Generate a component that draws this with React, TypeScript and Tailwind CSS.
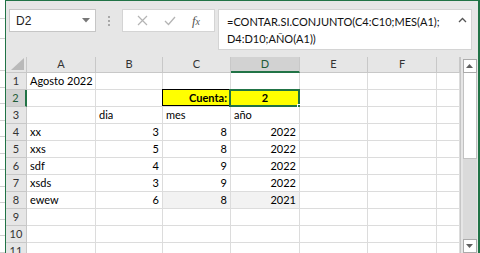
import React from 'react';

const GREEN = '#217346';

type Cell = { v?: string; align?: 'l' | 'r' | 'c'; bold?: boolean; bg?: string };

// columnas: A..G
const rows: Cell[][] = [
  [{ v: 'Agosto 2022' }, {}, {}, {}, {}, {}, {}],
  [{}, {}, { v: 'Cuenta:', align: 'r', bold: true }, { v: '2', align: 'c', bold: true }, {}, {}, {}],
  [{}, { v: 'dia' }, { v: 'mes' }, { v: 'año' }, {}, {}, {}],
  [{ v: 'xx' }, { v: '3', align: 'r' }, { v: '8', align: 'r' }, { v: '2022', align: 'r' }, {}, {}, {}],
  [{ v: 'xxs' }, { v: '5', align: 'r' }, { v: '8', align: 'r' }, { v: '2022', align: 'r' }, {}, {}, {}],
  [{ v: 'sdf' }, { v: '4', align: 'r' }, { v: '9', align: 'r' }, { v: '2022', align: 'r' }, {}, {}, {}],
  [{ v: 'xsds' }, { v: '3', align: 'r' }, { v: '9', align: 'r' }, { v: '2022', align: 'r' }, {}, {}, {}],
  [{ v: 'ewew' }, { v: '6', align: 'r' }, { v: '8', align: 'r', bg: 'gray' }, { v: '2021', align: 'r', bg: 'gray' }, {}, {}, {}],
  [{}, {}, {}, {}, {}, {}, {}],
  [{}, {}, {}, {}, {}, {}, {}],
  [{}, {}, {}, {}, {}, {}, {}],
];

const cols = ['A', 'B', 'C', 'D', 'E', 'F', ''];

function NameBox() {
  return (
    <div className="w-[87px] h-[23px] bg-white border border-[#c6c6c6] flex items-center justify-between pl-[6px] pr-[5px]">
      <span className="text-[12px] text-[#222]" style={{ fontFamily: '"Liberation Sans", sans-serif' }}>D2</span>
      <svg width="8" height="5" viewBox="0 0 8 5"><path d="M0 0 H8 L4 4.5 Z" fill="#777" /></svg>
    </div>
  );
}

function FormulaButtons() {
  return (
    <div className="w-[93px] h-[23px] bg-white border border-[#d4d4d4] flex items-center justify-around px-[6px]">
      <svg width="11" height="11" viewBox="0 0 11 11"><path d="M1 1 L10 10 M10 1 L1 10" stroke="#b4b4b4" strokeWidth="1.2" /></svg>
      <svg width="12" height="10" viewBox="0 0 12 10"><path d="M1 5 L4.5 8.5 L11 1" stroke="#b4b4b4" strokeWidth="1.3" fill="none" /></svg>
      <span className="text-[13px] italic text-[#555] leading-none" style={{ fontFamily: '"Liberation Serif", serif' }}>
        f<span className="text-[10px]">x</span>
      </span>
    </div>
  );
}

function FormulaBar() {
  return (
    <div className="h-[56px] bg-[#e6e6e6] flex items-start pt-[8px] pl-[3px]">
      <NameBox />
      <div className="w-[26px] h-[23px] flex flex-col items-center justify-center gap-[2px]">
        <div className="w-[2px] h-[2px] bg-[#a8a8a8]" />
        <div className="w-[2px] h-[2px] bg-[#a8a8a8]" />
        <div className="w-[2px] h-[2px] bg-[#a8a8a8]" />
      </div>
      <FormulaButtons />
      <div className="ml-[3px] w-[254px] h-[41px] bg-white border border-[#d4d4d4] flex justify-between pl-[8px] pr-[4px] pt-[3px]">
        <div className="text-[11px] leading-[17px] text-[#111]" style={{ fontFamily: 'Lato, sans-serif' }}>
          <div>=CONTAR.SI.CONJUNTO(C4:C10;MES(A1);</div>
          <div>D4:D10;AÑO(A1))</div>
        </div>
        <svg width="9" height="6" viewBox="0 0 9 6" className="mt-[4px]"><path d="M1 5 L4.5 1.5 L8 5" stroke="#555" strokeWidth="1.3" fill="none" /></svg>
      </div>
    </div>
  );
}

function Grid() {
  const template = 'grid grid-cols-[21px_69px_67px_68px_69px_68px_69px_23px] grid-rows-[16px_repeat(11,17px)]';
  return (
    <div className={`${template} w-[454px]`} style={{ fontFamily: 'Lato, sans-serif' }}>
      {/* esquina */}
      <div className="bg-[#e6e6e6] border-r border-b border-[#c8c8c8] flex items-end justify-end pr-[2px] pb-[2px]">
        <svg width="13" height="12" viewBox="0 0 13 12"><path d="M13 0 V12 H0 Z" fill="#b9b9b9" /></svg>
      </div>
      {cols.map((c, i) => (
        <div
          key={'h' + i}
          className={
            'flex items-center justify-center text-[11px] border-r ' +
            (c === 'D'
              ? 'bg-[#d2d2d2] border-b-2 border-b-[#217346] border-r-[#c8c8c8] text-[#1e5c37]'
              : 'bg-[#e6e6e6] border-b border-[#c8c8c8] text-[#333]')
          }
        >
          {c}
        </div>
      ))}
      {rows.map((r, ri) => (
        <React.Fragment key={'r' + ri}>
          <div
            className={
              'flex items-center justify-center text-[11px] border-b ' +
              (ri === 1
                ? 'bg-[#d2d2d2] border-r-2 border-r-[#217346] border-b-[#c8c8c8] text-[#1e5c37]'
                : 'bg-[#e6e6e6] border-r border-[#c8c8c8] text-[#333]')
            }
          >
            {ri + 1}
          </div>
          {r.map((cell, ci) => {
            const yellow = ri === 1 && (ci === 2 || ci === 3);
            const bg = yellow ? 'bg-[#ffff00]' : cell.bg ? 'bg-[#f2f2f2]' : 'bg-white';
            const al = cell.align === 'r' ? 'justify-end' : cell.align === 'c' ? 'justify-center' : 'justify-start';
            return (
              <div
                key={ci}
                className={`relative flex items-center ${al} ${bg} px-[3px] border-r border-b border-[#dcdcdc] text-[11px] text-black whitespace-nowrap ${cell.bold ? 'font-bold' : ''}`}
              >
                {cell.v}
                {ri === 1 && ci === 2 && (
                  <div className="absolute -top-px -left-px right-0 bottom-0 border border-black pointer-events-none" />
                )}
                {ri === 1 && ci === 3 && (
                  <>
                    <div className="absolute -top-px -left-[2px] -right-px -bottom-px border-2 border-[#217346] pointer-events-none" />
                    <div className="absolute -right-[3px] -bottom-[3px] w-[5px] h-[5px] bg-[#217346] border border-white" />
                  </>
                )}
              </div>
            );
          })}
        </React.Fragment>
      ))}
    </div>
  );
}

function Scrollbar() {
  return (
    <div className="w-[18px] h-full bg-[#e6e6e6] border-l border-[#c6c6c6] flex flex-col items-center pt-[2px]">
      <div className="w-[14px] h-[14px] bg-white border border-[#ababab] flex items-center justify-center">
        <svg width="7" height="4" viewBox="0 0 7 4"><path d="M0 4 L3.5 0 L7 4 Z" fill="#606060" /></svg>
      </div>
      <div className="w-[14px] h-[86px] bg-white border border-[#c2c2c2] border-t-0" />
      <div className="w-[14px] flex-1 bg-[#dadada]" />
      <div className="w-[14px] h-[14px] bg-white border border-[#ababab] flex items-center justify-center">
        <svg width="7" height="4" viewBox="0 0 7 4"><path d="M0 0 L3.5 4 L7 0 Z" fill="#606060" /></svg>
      </div>
    </div>
  );
}

export default function App() {
  return (
    <div className="w-[480px] h-[253px] overflow-hidden flex bg-white">
      {/* ventana de atrás */}
      <div className="w-[5px] h-full bg-white flex flex-col">
        <div className="h-[20px] border-b border-[#d0d0d0]" />
        <div className="h-[20px] border-b border-[#d0d0d0]" />
        <div className="h-[33px] border-b border-[#d0d0d0]" />
        {Array.from({ length: 11 }).map((_, i) => (
          <div key={i} className="h-[17px] border-b border-[#d0d0d0]" />
        ))}
      </div>
      <div className="w-[1px] h-full bg-[#217346]" />
      <div className="flex-1 flex flex-col border-t border-[#217346]">
        <FormulaBar />
        <div className="flex flex-1 overflow-hidden">
          <Grid />
          <Scrollbar />
        </div>
      </div>
      <div className="w-[2px] h-full" style={{ backgroundColor: GREEN }} />
    </div>
  );
}
